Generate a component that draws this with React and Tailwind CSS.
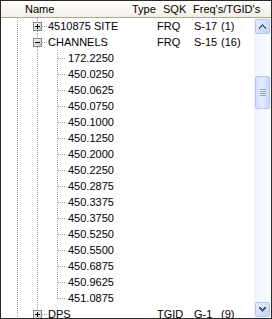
import React from "react";

const DOT = "#a0a0a0";

function VLine({ y1, y2 }) {
  return <line x1="10.5" y1={y1} x2="10.5" y2={y2} stroke={DOT} strokeWidth="1" strokeDasharray="1 1" />;
}
function HLine({ x1, x2 }) {
  return <line x1={x1} y1="8.5" x2={x2} y2="8.5" stroke={DOT} strokeWidth="1" strokeDasharray="1 1" />;
}

// kinds: "empty", "full", "box-plus", "box-minus", "box-plus-last", "tee", "end"
function Cell({ kind }) {
  return (
    <svg width="20" height="16" viewBox="0 0 20 16" shapeRendering="crispEdges" className="shrink-0 block">
      {kind === "full" && <VLine y1={0} y2={16} />}
      {kind === "tee" && (
        <>
          <VLine y1={0} y2={16} />
          <HLine x1={11} x2={19} />
        </>
      )}
      {kind === "end" && (
        <>
          <VLine y1={0} y2={9} />
          <HLine x1={11} x2={19} />
        </>
      )}
      {(kind === "box-plus" || kind === "box-minus" || kind === "box-plus-last") && (
        <>
          <VLine y1={0} y2={4} />
          {kind !== "box-plus-last" && <VLine y1={13} y2={16} />}
          <HLine x1={15} x2={20} />
          <defs>
            <linearGradient id="bx" x1="0" y1="0" x2="1" y2="1">
              <stop offset="0" stopColor="#ffffff" />
              <stop offset="1" stopColor="#c6c2b2" />
            </linearGradient>
          </defs>
          <rect x="6.5" y="4.5" width="8" height="8" fill="url(#bx)" stroke="#7a8aa0" strokeWidth="1" />
          <line x1="8" y1="8.5" x2="13" y2="8.5" stroke="#000" strokeWidth="1" />
          {kind !== "box-minus" && <line x1="10.5" y1="6" x2="10.5" y2="11" stroke="#000" strokeWidth="1" />}
        </>
      )}
    </svg>
  );
}

const freqs = [
  "172.2250","450.0250","450.0625","450.0750","450.1000","450.1250","450.2000","450.2250",
  "450.2875","450.3375","450.3750","450.5250","450.5500","450.6875","450.9625","451.0875",
];

function Row({ cells, label, type, sqk, count }) {
  return (
    <div className="flex h-[16px] shrink-0 items-center leading-[16px]">
      <div className="w-[6px] shrink-0" />
      {cells.map((c, i) => (
        <Cell key={i} kind={c} />
      ))}
      <div className="w-[1px] shrink-0" />
      <span className="whitespace-nowrap">{label}</span>
      {type !== undefined && (
        <>
          <div className="flex-1" />
        </>
      )}
    </div>
  );
}

function ScrollBtn({ down }) {
  return (
    <div className="h-[17px] w-[17px] shrink-0 p-[1px]">
      <div className="flex h-full w-full items-center justify-center rounded-[2px] border border-[#b5c8f2] bg-gradient-to-br from-[#e6eefd] to-[#c4d5fb]">
        <svg width="7" height="5" viewBox="0 0 7 5" shapeRendering="crispEdges">
          {down ? (
            <path d="M0 0 L3.5 3.5 L7 0" fill="none" stroke="#4d6185" strokeWidth="2" />
          ) : (
            <path d="M0 4.5 L3.5 1 L7 4.5" fill="none" stroke="#4d6185" strokeWidth="2" />
          )}
        </svg>
      </div>
    </div>
  );
}

export default function App() {
  const rows = [];
  rows.push({ cells: ["full", "box-plus"], label: "4510875 SITE", type: "FRQ", sqk: "S-17", count: "(1)" });
  rows.push({ cells: ["full", "box-minus"], label: "CHANNELS", type: "FRQ", sqk: "S-15", count: "(16)" });
  freqs.forEach((f, i) =>
    rows.push({ cells: ["full", "full", i === freqs.length - 1 ? "end" : "tee"], label: f })
  );
  rows.push({ cells: ["full", "box-plus-last"], label: "DPS", type: "TGID", sqk: "G-1", count: "(9)" });

  return (
    <div
      className="flex h-[319px] w-[272px] flex-col overflow-hidden border border-[#2a2a2a] bg-white text-[11px] text-black"
      style={{ fontFamily: '"Liberation Sans", Arial, sans-serif' }}
    >
      {/* header */}
      <div className="flex h-[17px] shrink-0 items-center border-b border-[#aca899] bg-gradient-to-b from-white to-[#f1efe6] leading-[16px]">
        <span className="ml-[24px] w-[107px]">Name</span>
        <span className="w-[31px]">Type</span>
        <span className="w-[30px]">SQK</span>
        <span>Freq's/TGID's</span>
      </div>
      {/* body */}
      <div className="flex min-h-0 flex-1">
        <div className="flex min-w-0 flex-1 flex-col overflow-hidden">
          {rows.map((r, i) => (
            <div key={i} className="flex h-[16px] shrink-0 items-center leading-[16px]">
              <div className="w-[6px] shrink-0" />
              {r.cells.map((c, j) => (
                <Cell key={j} kind={c} />
              ))}
              <span className={(r.cells.length === 2 ? "w-[110px]" : "w-[90px]") + " shrink-0 whitespace-nowrap pl-[1px]"}>{r.label}</span>
              {r.type && (
                <>
                  <span className="w-[37px] shrink-0">{r.type}</span>
                  <span className="w-[27px] shrink-0">{r.sqk}</span>
                  <span className="shrink-0">{r.count}</span>
                </>
              )}
            </div>
          ))}
        </div>
        {/* scrollbar */}
        <div className="flex w-[17px] shrink-0 flex-col bg-gradient-to-r from-[#eef3fd] to-[#fbfcff]">
          <ScrollBtn />
          <div className="flex min-h-0 flex-1 flex-col">
            <div className="h-[40px] shrink-0" />
            <div className="h-[35px] w-[17px] shrink-0 p-[1px]">
              <div className="flex h-full w-full flex-col items-center justify-center gap-[1px] rounded-[2px] border border-[#b5c8f2] bg-gradient-to-r from-[#d2dffb] via-[#e3ebfd] to-[#c9d8fb]">
                <div className="h-[1px] w-[6px] bg-[#8ea5d8]" />
                <div className="h-[1px] w-[6px] bg-[#8ea5d8]" />
                <div className="h-[1px] w-[6px] bg-[#8ea5d8]" />
                <div className="h-[1px] w-[6px] bg-[#8ea5d8]" />
              </div>
            </div>
          </div>
          <ScrollBtn down />
        </div>
      </div>
    </div>
  );
}
